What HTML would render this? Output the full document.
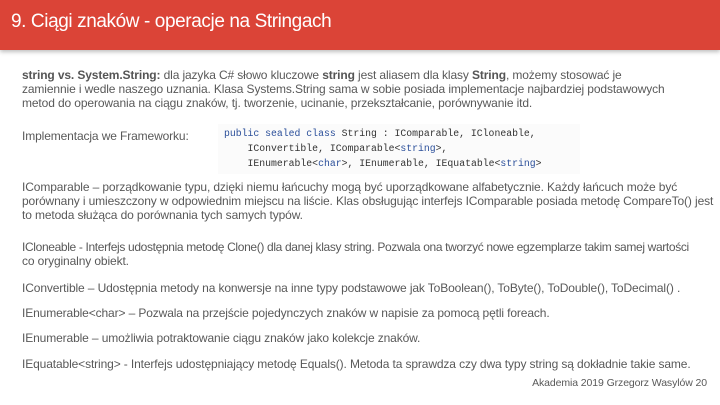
<!DOCTYPE html>
<html><head><meta charset="utf-8"><style>
*{margin:0;padding:0}
body{width:720px;height:405px;background:#fff;position:relative;overflow:hidden;font-family:"Liberation Sans",sans-serif;color:#595959}
.hd{position:absolute;left:0;top:0;width:720px;height:50px;background:#db4437;box-shadow:0 2px 4px rgba(0,0,0,.25)}
.hd span{position:absolute;left:11px;top:11px;font-size:19px;color:#fff;letter-spacing:-0.4px}
.l{position:absolute;left:22px;font-size:12px;white-space:nowrap;letter-spacing:-0.12px;line-height:14px}
b{color:#555}
.code{position:absolute;left:218px;top:124px;width:356px;height:48px;background:#fbfbfb;font-family:"Liberation Mono",monospace;font-size:9.8px;color:#333;line-height:15px;padding:2px 0 0 6px}
.k{color:#2b4f9a}
.ft{position:absolute;right:13px;top:377px;font-size:10.5px;white-space:nowrap;letter-spacing:-0.1px}
</style></head><body>
<div class="hd"><span>9. Ciągi znaków - operacje na Stringach</span></div>
<div class="l" style="top:68px"><b>string vs. System.String:</b> dla jazyka C# słowo kluczowe <b>string</b> jest aliasem dla klasy <b>String</b>, możemy stosować je</div>
<div class="l" style="top:82px">zamiennie i wedle naszego uznania. Klasa Systems.String sama w sobie posiada implementacje najbardziej podstawowych</div>
<div class="l" style="top:96px">metod do operowania na ciągu znaków, tj. tworzenie, ucinanie, przekształcanie, porównywanie itd.</div>
<div class="l" style="top:129px">Implementacja we Frameworku:</div>
<div class="code"><span class="k">public sealed class</span> String : IComparable, ICloneable,<br>&nbsp;&nbsp;&nbsp;&nbsp;IConvertible, IComparable&lt;<span class="k">string</span>&gt;,<br>&nbsp;&nbsp;&nbsp;&nbsp;IEnumerable&lt;<span class="k">char</span>&gt;, IEnumerable, IEquatable&lt;<span class="k">string</span>&gt;</div>
<div class="l" style="top:180px">IComparable – porządkowanie typu, dzięki niemu łańcuchy mogą być uporządkowane alfabetycznie. Każdy łańcuch może być</div>
<div class="l" style="top:194px">porównany i umieszczony w odpowiednim miejscu na liście. Klas obsługując interfejs IComparable posiada metodę CompareTo() jest</div>
<div class="l" style="top:208px">to metoda służąca do porównania tych samych typów.</div>
<div class="l" style="top:240px;letter-spacing:-0.35px">ICloneable - Interfejs udostępnia metodę Clone() dla danej klasy string. Pozwala ona tworzyć nowe egzemplarze takim samej wartości</div>
<div class="l" style="top:254px">co oryginalny obiekt.</div>
<div class="l" style="top:281px">IConvertible – Udostępnia metody na konwersje na inne typy podstawowe jak ToBoolean(), ToByte(), ToDouble(), ToDecimal() .</div>
<div class="l" style="top:306px">IEnumerable&lt;char&gt; – Pozwala na przejście pojedynczych znaków w napisie za pomocą pętli foreach.</div>
<div class="l" style="top:331px">IEnumerable – umożliwia potraktowanie ciągu znaków jako kolekcje znaków.</div>
<div class="l" style="top:357px">IEquatable&lt;string&gt; - Interfejs udostępniający metodę Equals(). Metoda ta sprawdza czy dwa typy string są dokładnie takie same.</div>
<div class="ft">Akademia 2019 Grzegorz Wasylów 20</div>
</body></html>
